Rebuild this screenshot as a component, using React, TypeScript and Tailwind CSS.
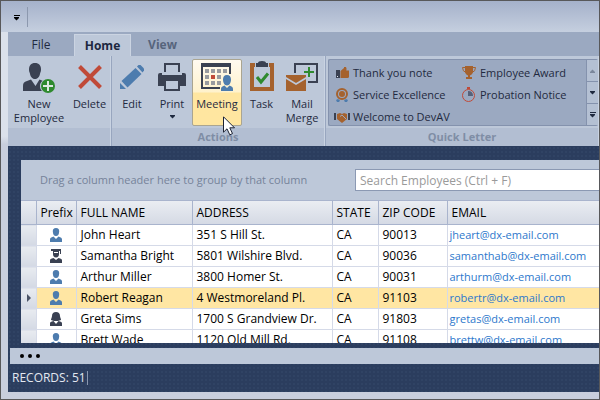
import type { ReactNode } from 'react';
import clsx from 'clsx';

type Icon = () => ReactNode;

const DARK = '#3a4152';
const BLUE = '#4d7cae';
const ORANGE = '#a5622e';
const GREEN = '#2f8a2f';
const RED = '#c04a38';

/* Large ribbon icons */

function NewEmployeeIcon() {
  return (
    <svg className="shrink-0" width="32" height="30" viewBox="0 0 32 30" aria-hidden="true">
      <path
        fill={DARK}
        d="M12 0c4 0 6 2.600 6 6.500 0 1.500-.3 2.500-.8 3.500-.6 3.500-2.200 6-5.200 6s-4.600-2.500-5.200-6C6.300 9 6 8 6 6.500 6 2.600 8 0 12 0z"
      />
      <path fill={DARK} d="M0 28v-5c0-3 1-4.200 4-5l4-1.500 4.500 6.500 4-6.500 3 1.200c-1.800 1.500-2.600 3.200-2.500 5.200 0 2 .6 3.800 2 5.100z" />
      <circle cx="25" cy="23" r="7" fill={GREEN} />
      <path d="M25 18v10M20 23h10" stroke="#dfe9e4" strokeWidth="2" />
    </svg>
  );
}

function DeleteIcon() {
  return (
    <svg className="shrink-0" width="26" height="30" viewBox="0 0 26 30" aria-hidden="true">
      <path d="M2.500 3.500l21 21M23.500 3.500l-21 21" stroke={RED} strokeWidth="4" />
    </svg>
  );
}

function EditIcon() {
  return (
    <svg className="shrink-0" width="26" height="30" viewBox="0 0 26 30" aria-hidden="true">
      <g fill={BLUE}>
        <path d="M1 20l6 6H1z" />
        <path d="M2.500 18L16.500 5l6 6-14 13.500z" />
        <path d="M18 3.500l1.500-1.500h2L25 5.500v2L23.500 9.500z" />
      </g>
    </svg>
  );
}

function PrintIcon() {
  return (
    <svg className="shrink-0" width="28" height="30" viewBox="0 0 28 30" aria-hidden="true">
      <path fill={DARK} d="M6 0h16v9h-2V2H8v7H6z" />
      <path
        fill={DARK}
        fillRule="evenodd"
        d="M2 10h2v2h20v-2h2q2 0 2 2v11h-6v5H6v-5H0V12q0-2 2-2zM8 18v8h12v-8z"
      />
    </svg>
  );
}

function MeetingIcon() {
  return (
    <svg className="shrink-0" width="32" height="30" viewBox="0 0 32 30" aria-hidden="true">
      <path fill={DARK} d="M0 0h30v4H0z" />
      <path fill={DARK} d="M0 4h2v20h17v2H0zM28 4h2v7h-2z" />
      <g fill="#999b9f">
        <path d="M10 6h4v4h-4zM16 6h4v4h-4zM22 6h4v4h-4zM4 12h4v4H4zM16 12h4v4h-4zM4 18h4v4H4zM10 18h4v4h-4zM16 18h4v4h-4zM4 6h4v4H4z" />
      </g>
      <path fill={RED} d="M10 12h4v4h-4z" />
      <path fill={BLUE} d="M26 12c2.800 0 4 2 4 4.500 0 3-1.500 6-4 6s-4-3-4-6c0-2.500 1.200-4.500 4-4.500zM20 28v-2c0-2 1-2.500 3.500-3.500L26 25l2.500-2.500C31 23.500 32 24 32 26v2z" />
    </svg>
  );
}

function TaskIcon() {
  return (
    <svg className="shrink-0 overflow-visible" width="24" height="30" viewBox="0 0 24 30" aria-hidden="true">
      <path fill={ORANGE} fillRule="evenodd" d="M0 0h24v28H0zM4 4v20h16V4z" />
      <path fill="#bdc8d9" d="M5 0h14v5H5z" />
      <path fill={DARK} d="M6 0h2q0-2 4-2t4 2h2v4H6z" />
      <path d="M7 14l4 5 7-8.500" fill="none" stroke={GREEN} strokeWidth="3" />
    </svg>
  );
}

function MailMergeIcon() {
  return (
    <svg className="shrink-0" width="32" height="30" viewBox="0 0 32 30" aria-hidden="true">
      <path d="M9 10V1h22v18h-9" fill="none" stroke={DARK} strokeWidth="2" />
      <path d="M23 4v10M18 9h10" stroke={GREEN} strokeWidth="2" />
      <path fill={ORANGE} d="M0 12h20v2l-10 6L0 14z" />
      <path fill={ORANGE} d="M0 16l10 6 10-6v12H0z" />
    </svg>
  );
}

/* Gallery icons */

function ThumbIcon() {
  return (
    <svg className="shrink-0" width="16" height="16" viewBox="0 0 16 16" aria-hidden="true">
      <path fill={DARK} d="M2 5h4v8H2z" />
      <path fill="#dfe5ee" d="M3 11h1v1H3z" />
      <path fill={ORANGE} d="M6.500 6L10 3V2h2q1 1.500.3 3.500H15V12q-.3 1-1.500 1h-7z" />
    </svg>
  );
}

function MedalIcon() {
  return (
    <svg className="shrink-0" width="16" height="16" viewBox="0 0 16 16" aria-hidden="true">
      <circle cx="8" cy="7" r="5" fill="none" stroke={ORANGE} strokeWidth="2" />
      <circle cx="8" cy="7" r="3" fill={ORANGE} />
      <path fill={BLUE} d="M2 13l2-1 2 1.500L5 15H3zM14 13l-2-1-2 1.500 1 1.500h2z" />
    </svg>
  );
}

function HandshakeIcon() {
  return (
    <svg className="shrink-0" width="16" height="16" viewBox="0 0 16 16" aria-hidden="true">
      <path fill={DARK} d="M0 4h2v7H0zM14 4h2v7h-2z" />
      <path fill={ORANGE} d="M3 5l3-1 2 1 2-1 3 1v5l-5 4-5-4z" />
      <path d="M6 7.500l2-1.500 4 4" fill="none" stroke="#9ba9c1" />
    </svg>
  );
}

function TrophyIcon() {
  return (
    <svg className="shrink-0" width="16" height="16" viewBox="0 0 16 16" aria-hidden="true">
      <path fill={ORANGE} d="M4 1h8v5q0 3-3 4.500V12h2v2H5v-2h2v-1.500Q4 9 4 6z" />
      <path d="M4 2.500H1.500q0 4 3.500 5M12 2.500h2.500q0 4-3.500 5" fill="none" stroke={ORANGE} />
    </svg>
  );
}

function StopwatchIcon() {
  return (
    <svg className="shrink-0" width="16" height="16" viewBox="0 0 16 16" aria-hidden="true">
      <circle cx="7.500" cy="8.500" r="6" fill="none" stroke={RED} />
      <path fill={RED} d="M6 0h3v2H6z" />
      <path fill="#56617a" d="M7 4q5 0 5 5H7z" />
    </svg>
  );
}

/* Prefix icons of the grid */

function ManIcon() {
  return (
    <svg className="mx-auto" width="14" height="14" viewBox="0 0 14 14" aria-hidden="true">
      <path fill={BLUE} d="M7 0c2.400 0 3.300 1.500 3.200 3.500C10 6.500 9 8 7 8S4 6.500 3.800 3.500C3.700 1.500 4.600 0 7 0zM1 14v-2.500c0-1.500 1-2 3.500-3L7 11l2.500-2.500c2.500 1 3.500 1.500 3.500 3V14z" />
    </svg>
  );
}

function GraduateIcon() {
  return (
    <svg className="mx-auto" width="14" height="14" viewBox="0 0 14 14" aria-hidden="true">
      <path fill={DARK} d="M2 0h10v5h-1V2h-1v3c0 2-1 3.500-3 3.500S4 7 4 5V2H2z" />
      <path fill="#fff" d="M5 3h4v1H5z" />
      <path fill={DARK} d="M1 14v-2.500c0-1.500 1-2 3.500-2.500L7 11l2.500-2c2.500.5 3.500 1 3.500 2.500V14z" />
    </svg>
  );
}

function WomanIcon() {
  return (
    <svg className="mx-auto" width="14" height="14" viewBox="0 0 14 14" aria-hidden="true">
      <path fill={DARK} d="M7 0c2.500 0 4 1.500 4 4 0 1.500 1 2.500 1 4L9 9H5L2 8c0-1.500 1-2.500 1-4 0-2.500 1.500-4 4-4z" />
      <path fill={DARK} d="M1 14v-2.500C1 10 2 9.800 4.500 9L7 12l2.500-3c2.500.8 3.500 1 3.500 2.500V14z" />
    </svg>
  );
}

function Caret({ className }: { className?: string }) {
  return (
    <svg className={className} width="7" height="4" viewBox="0 0 7 4" aria-hidden="true">
      <path fill="currentColor" d="M1 0h5v1L3.500 3.500 1 1z" />
    </svg>
  );
}

const employees = [
  { prefix: ManIcon, name: 'John Heart', address: '351 S Hill St.', state: 'CA', zip: '90013', email: 'jheart@dx-email.com' },
  { prefix: GraduateIcon, name: 'Samantha Bright', address: '5801 Wilshire Blvd.', state: 'CA', zip: '90036', email: 'samanthab@dx-email.com' },
  { prefix: ManIcon, name: 'Arthur Miller', address: '3800 Homer St.', state: 'CA', zip: '90031', email: 'arthurm@dx-email.com' },
  { prefix: ManIcon, name: 'Robert Reagan', address: '4 Westmoreland Pl.', state: 'CA', zip: '91103', email: 'robertr@dx-email.com' },
  { prefix: WomanIcon, name: 'Greta Sims', address: '1700 S Grandview Dr.', state: 'CA', zip: '91803', email: 'gretas@dx-email.com' },
  { prefix: ManIcon, name: 'Brett Wade', address: '1120 Old Mill Rd.', state: 'CA', zip: '91108', email: 'brettw@dx-email.com' },
];

const selectedName = 'Robert Reagan';

const letters: { icon: Icon; label: string }[] = [
  { icon: ThumbIcon, label: 'Thank you note' },
  { icon: TrophyIcon, label: 'Employee Award' },
  { icon: MedalIcon, label: 'Service Excellence' },
  { icon: StopwatchIcon, label: 'Probation Notice' },
  { icon: HandshakeIcon, label: 'Welcome to DevAV' },
];

interface RibbonButtonProps {
  icon: Icon;
  label: string;
  width: string;
  menu?: boolean;
  hot?: boolean;
}

function RibbonButton({ icon: ButtonIcon, label, width, menu, hot }: RibbonButtonProps) {
  return (
    <button
      className={clsx(
        'flex h-[67px] shrink-0 flex-col items-center rounded-xs border pt-[3px] leading-[14px]',
        width,
        hot
          ? 'border-[#aaa591] bg-linear-to-b from-[#fffaf0] from-0% via-[#fff2cc] via-49% to-[#ffe6a0] to-51%'
          : 'border-transparent'
      )}
    >
      <ButtonIcon />
      <span className="mt-1">{label}</span>
      {menu && <Caret className="mt-1" />}
    </button>
  );
}

interface RibbonGroupProps {
  title?: string;
  className?: string;
  children: ReactNode;
}

function RibbonGroup({ title, className, children }: RibbonGroupProps) {
  return (
    <section className={clsx('flex flex-col border-r border-[#98a6bf]', className)}>
      <div className="flex h-[72px] border-r border-[#c9d3e2] pt-[3px]">{children}</div>
      <h2 className="h-[18px] border-r border-[#c9d3e2] bg-[#b2bed2] text-center leading-[18px] font-bold text-[#7f8da5]">
        {title}
      </h2>
    </section>
  );
}

export default function App() {
  return (
    <div className="relative flex h-screen flex-col overflow-hidden border border-[#58585a] bg-linear-to-b from-[#dbe1eb] from-34% to-[#c8cedd] to-36% font-['Open_Sans','Noto_Sans',sans-serif] text-[12px] text-[#1f2a40]">
      {/* Title bar */}
      <header className="flex h-[31px] shrink-0 items-center bg-linear-to-b from-[#a5b1ca] to-[#c5cfdf] pl-3">
        <button aria-label="Customize quick access toolbar" className="flex h-4 w-3.5 flex-col text-black">
          <span className="mt-1.5 mb-px ml-px h-px w-1.5 bg-black" />
          <Caret />
        </button>
        <span className="h-5 w-px bg-[#8c98ae]" />
      </header>

      <div className="flex min-h-0 flex-1 flex-col pb-[7px] pl-[7px]">
        {/* Tabs */}
        <nav className="flex h-6 shrink-0 bg-[#9ba9c1] pt-0.5">
          <button className="ml-1 w-[58px]">File</button>
          <button className="ml-1 w-[57px] border border-b-0 border-[#cbd4e2] bg-[#bdc8d9] font-bold text-[#1c2740]">Home</button>
          <button className="w-[63px] font-bold text-[#56647c]">View</button>
        </nav>

        {/* Ribbon */}
        <div className="flex shrink-0 bg-[#bdc8d9] text-[11px]">
          <RibbonGroup className="w-[104px]">
            <RibbonButton icon={NewEmployeeIcon} label="New Employee" width="w-[62px]" />
            <RibbonButton icon={DeleteIcon} label="Delete" width="w-[39px]" />
          </RibbonGroup>
          <RibbonGroup title="Actions" className="w-[214px]">
            <RibbonButton icon={EditIcon} label="Edit" width="w-10" />
            <RibbonButton icon={PrintIcon} label="Print" width="w-10" menu />
            <RibbonButton icon={MeetingIcon} label="Meeting" width="w-[50px]" hot />
            <RibbonButton icon={TaskIcon} label="Task" width="w-[39px]" />
            <RibbonButton icon={MailMergeIcon} label="Mail Merge" width="w-[42px]" />
          </RibbonGroup>
          <RibbonGroup title="Quick Letter" className="min-w-0 flex-1 border-r-0">
            <div className="ml-0.5 flex h-[67px] min-w-0 flex-1 rounded-xs border border-r-0 border-[#8492ad] bg-[#9ba9c1]">
              <ul className="grid flex-1 grid-cols-[127px_1fr] pt-0.5 pl-[5px]">
                {letters.map(({ icon: LetterIcon, label }) => (
                  <li key={label} className="h-[22px]">
                    <button className="flex h-full items-center gap-[3px] whitespace-nowrap">
                      <LetterIcon />
                      {label}
                    </button>
                  </li>
                ))}
              </ul>
              <div className="flex w-3 flex-col divide-y divide-[#8492ad] border-l border-[#8492ad] bg-[#b4c0d3]">
                <button aria-label="Scroll up" className="flex flex-1 items-center justify-center text-[#7b879c]">
                  <Caret className="rotate-180" />
                </button>
                <button aria-label="Scroll down" className="flex flex-1 items-center justify-center">
                  <Caret />
                </button>
                <button aria-label="More letters" className="flex flex-1 flex-col items-center justify-center gap-px">
                  <span className="h-px w-1.5 bg-current" />
                  <Caret />
                </button>
              </div>
            </div>
          </RibbonGroup>
        </div>

        {/* Workspace */}
        <main className="flex min-h-0 flex-1 flex-col bg-[#2b3d5e] bg-[radial-gradient(#304364_1px,transparent_1px)] bg-size-[4px_4px]">
          <div className="mt-3.5 ml-[13px] min-h-0 flex-1 overflow-hidden bg-white">
            <div className="flex h-10 items-center justify-between bg-[#bdc8d9] pl-[19px] text-[#76839a]">
              <span className="text-[11px]">Drag a column header here to group by that column</span>
              <input
                type="search"
                aria-label="Search employees"
                placeholder="Search Employees (Ctrl + F)"
                className="h-[22px] w-[244px] border border-r-0 border-[#8b99b3] bg-white px-1 placeholder:text-[#9a9a9a]"
              />
            </div>
            <table className="w-full table-fixed border-collapse text-black">
              <colgroup>
                <col className="w-[15px]" />
                <col className="w-10" />
                <col className="w-[116px]" />
                <col className="w-[140px]" />
                <col className="w-[46px]" />
                <col className="w-[69px]" />
                <col />
              </colgroup>
              <thead>
                <tr className="h-6 bg-linear-to-b from-[#eaedf2] to-[#d4d9e4] text-left *:border *:border-[#a9b4cd] *:p-0 *:pl-1 *:font-normal *:first:border-l-0 *:last:border-r-0">
                  <th aria-label="Row indicator" />
                  <th>Prefix</th>
                  <th>FULL NAME</th>
                  <th>ADDRESS</th>
                  <th>STATE</th>
                  <th>ZIP CODE</th>
                  <th>EMAIL</th>
                </tr>
              </thead>
              <tbody>
                {employees.map(({ prefix: PrefixIcon, name, address, state, zip, email }) => (
                  <tr
                    key={name}
                    className={clsx(
                      'h-[21px] whitespace-nowrap *:border-r *:border-b *:border-[#d5dae8] *:p-0 *:last:border-r-0',
                      name === selectedName && 'bg-[#ffe6a3]'
                    )}
                  >
                    <td className="bg-linear-to-b from-[#e8ebf0] to-[#d4d9e4]">
                      {name === selectedName && (
                        <svg className="ml-1" width="8" height="8" viewBox="0 0 8 8" aria-label="Current row">
                          <path fill="#4a5366" d="M2 0l4 4-4 4z" />
                        </svg>
                      )}
                    </td>
                    <td><PrefixIcon /></td>
                    <td><span className="pl-1">{name}</span></td>
                    <td><span className="pl-1">{address}</span></td>
                    <td><span className="pl-1">{state}</span></td>
                    <td><span className="pl-1">{zip}</span></td>
                    <td>
                      <a href={`mailto:${email}`} className="pl-0.5 text-[11px] text-[#2d78cc]">{email}</a>
                    </td>
                  </tr>
                ))}
              </tbody>
            </table>
          </div>

          <div className="mt-[5px] ml-0.5 flex h-4 shrink-0 items-center bg-[#bdc8d9]">
            <button aria-label="More views" className="flex gap-1 pl-2.5">
              <span className="size-1 rounded-full bg-black" />
              <span className="size-1 rounded-full bg-black" />
              <span className="size-1 rounded-full bg-black" />
            </button>
          </div>
          <footer className="flex h-7 shrink-0 items-center pl-1 text-[#e3e8f0]">
            RECORDS: 51
            <span className="ml-px h-3.5 w-px bg-[#8a97b0]" />
          </footer>
        </main>
      </div>

      {/* Mouse pointer */}
      <svg className="absolute top-[115px] left-[222px]" width="13" height="20" viewBox="0 0 13 20" aria-hidden="true">
        <path fill="#fff" stroke="#1c2233" d="M.5.800v15.400l3.500-3.400 2.800 6 2.700-1.200-2.700-5.800h4.700z" />
      </svg>
    </div>
  );
}
